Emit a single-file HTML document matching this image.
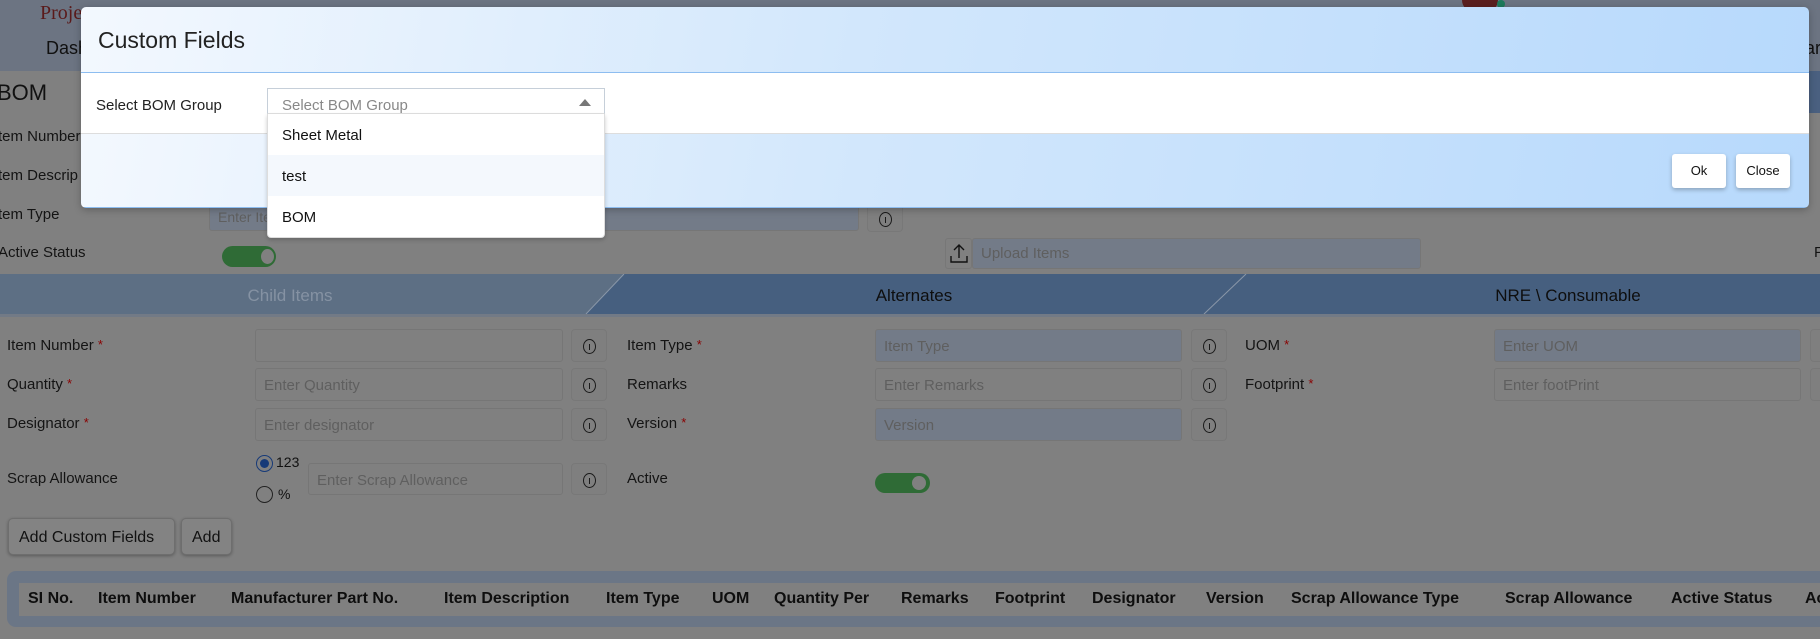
<!DOCTYPE html>
<html><head><meta charset="utf-8"><style>
*{box-sizing:border-box;margin:0;padding:0}
body{width:1820px;height:639px;overflow:hidden;background:#808080;font-family:"Liberation Sans",sans-serif;position:relative;color:#111}
.a{position:absolute;white-space:nowrap}
.lbl{font-size:15px;color:#141414}
.req{color:#8a0000;font-size:13px;vertical-align:top}
.inp{position:absolute;height:33px;border:1px solid #767676;border-radius:3px;background:#808080;font-size:15px;color:#5f5f5f;padding:8px 8px;white-space:nowrap;overflow:hidden}
.dis{background:#737b88}
.info{position:absolute;width:36px;height:33px;border:1px solid #787878;border-radius:4px;background:#7f7f7f}
.info:after{content:"";position:absolute;left:11px;top:9px;width:11px;height:13px;border:1.3px solid #1a1a1a;border-radius:50%}
.info:before{content:"";position:absolute;left:17px;top:14px;width:1.3px;height:6px;background:#1a1a1a}
.th{position:absolute;top:590px;font-size:16px;font-weight:bold;color:#0e0e0e;white-space:nowrap}
</style></head><body>
<div class="a" style="left:0;top:0;width:1820px;height:71px;background:#6c7482"></div>
<div class="a" style="left:40px;top:2px;font-family:'Liberation Serif',serif;font-size:20px;color:#5a1a1a">Proje</div>
<div class="a" style="left:46px;top:38px;font-size:18px;color:#111">Dash</div>
<div class="a" style="left:1805px;top:38px;font-size:18px;color:#111">ar</div>
<div class="a" style="left:1462px;top:0;width:36px;height:12px;border-radius:0 0 18px 18px;background:#5a1f1f"></div>
<div class="a" style="left:1497px;top:0;width:8px;height:8px;border-radius:50%;background:#1d7a5b"></div>
<div class="a" style="left:1780px;top:71px;width:40px;height:42px;background:#4a6080"></div>
<div class="a" style="left:-3px;top:80px;font-size:22px;color:#111">BOM</div>
<div class="a lbl" style="left:-2px;top:128px">tem Number</div>
<div class="a lbl" style="left:-2px;top:167px">tem Descrip</div>
<div class="a lbl" style="left:-2px;top:206px">tem Type</div>
<div class="a lbl" style="left:-2px;top:244px">Active Status</div>
<div class="inp dis" style="left:209px;top:204px;width:650px;height:27px;padding:4px 8px;font-size:14px">Enter Item Type</div>
<div class="info" style="left:867px;top:202px;height:30px"></div>
<div class="a" style="left:222px;top:246px;width:54px;height:21px;border-radius:11px;background:#2f6b36"></div>
<div class="a" style="left:261px;top:249px;width:13px;height:15px;border-radius:50%;background:#808080"></div>
<div class="a" style="left:945px;top:238px;width:27px;height:31px;border:1px solid #777;border-radius:3px"></div>
<svg class="a" style="left:949px;top:243px" width="20" height="22"><path d="M10 2V15M5 7L10 2L15 7M2 13V19H18V13" fill="none" stroke="#111" stroke-width="1.4"/></svg>
<div class="inp dis" style="left:972px;top:238px;width:449px;height:31px;padding:6px 8px;font-size:15px">Upload Items</div>
<div class="a lbl" style="left:1814px;top:244px">F</div>
<svg class="a" style="left:0;top:274px" width="1820" height="40">
<rect width="1820" height="40" fill="#465f7f"/>
<polygon points="0,0 624,0 586,40 0,40" fill="#5d6f84"/>
<line x1="624" y1="0" x2="586" y2="40" stroke="#8a97a8" stroke-width="1"/>
<line x1="1246" y1="0" x2="1204" y2="40" stroke="#8a97a8" stroke-width="1"/>
<text x="290" y="27" font-family="Liberation Sans" font-size="17" fill="#8592a3" text-anchor="middle">Child Items</text>
<text x="914" y="27" font-family="Liberation Sans" font-size="17" fill="#0e0e0e" text-anchor="middle">Alternates</text>
<text x="1568" y="27" font-family="Liberation Sans" font-size="17" fill="#0e0e0e" text-anchor="middle">NRE \ Consumable</text>
</svg>
<div class="a" style="left:0;top:314px;width:1820px;height:3px;background:#727a86"></div>
<div class="a lbl" style="left:7px;top:337px">Item Number <span class="req">*</span></div>
<div class="a lbl" style="left:7px;top:376px">Quantity <span class="req">*</span></div>
<div class="a lbl" style="left:7px;top:415px">Designator <span class="req">*</span></div>
<div class="a lbl" style="left:7px;top:470px">Scrap Allowance</div>
<div class="inp" style="left:255px;top:329px;width:308px"></div>
<div class="inp" style="left:255px;top:368px;width:308px">Enter Quantity</div>
<div class="inp" style="left:255px;top:408px;width:308px">Enter designator</div>
<div class="info" style="left:571px;top:329px"></div>
<div class="info" style="left:571px;top:368px"></div>
<div class="info" style="left:571px;top:408px"></div>
<div class="a" style="left:256px;top:455px;width:17px;height:17px;border-radius:50%;border:1.5px solid #173a78;background:#808080"></div>
<div class="a" style="left:260px;top:459px;width:9px;height:9px;border-radius:50%;background:#173a78"></div>
<div class="a" style="left:276px;top:454px;font-size:14px">123</div>
<div class="a" style="left:256px;top:486px;width:17px;height:17px;border-radius:50%;border:1.3px solid #222"></div>
<div class="a" style="left:278px;top:486px;font-size:14px">%</div>
<div class="inp" style="left:308px;top:463px;width:255px;height:32px">Enter Scrap Allowance</div>
<div class="info" style="left:571px;top:463px;height:32px"></div>
<div class="a lbl" style="left:627px;top:337px">Item Type <span class="req">*</span></div>
<div class="a lbl" style="left:627px;top:376px">Remarks</div>
<div class="a lbl" style="left:627px;top:415px">Version <span class="req">*</span></div>
<div class="a lbl" style="left:627px;top:470px">Active</div>
<div class="inp dis" style="left:875px;top:329px;width:307px">Item Type</div>
<div class="inp" style="left:875px;top:368px;width:307px">Enter Remarks</div>
<div class="inp dis" style="left:875px;top:408px;width:307px">Version</div>
<div class="info" style="left:1191px;top:329px"></div>
<div class="info" style="left:1191px;top:368px"></div>
<div class="info" style="left:1191px;top:408px"></div>
<div class="a" style="left:875px;top:473px;width:55px;height:20px;border-radius:10px;background:#2f6b36"></div>
<div class="a" style="left:912px;top:476px;width:14px;height:14px;border-radius:50%;background:#808080"></div>
<div class="a lbl" style="left:1245px;top:337px">UOM <span class="req">*</span></div>
<div class="a lbl" style="left:1245px;top:376px">Footprint <span class="req">*</span></div>
<div class="inp dis" style="left:1494px;top:329px;width:307px">Enter UOM</div>
<div class="inp" style="left:1494px;top:368px;width:307px">Enter footPrint</div>
<div class="info" style="left:1810px;top:329px"></div>
<div class="info" style="left:1810px;top:368px"></div>
<div class="a" style="left:8px;top:518px;width:167px;height:37px;border:1px solid #6e6e6e;border-radius:5px;background:#838383;box-shadow:0 1px 3px rgba(0,0,0,.3);font-size:16px;padding:10px 0 0 10px">Add Custom Fields</div>
<div class="a" style="left:181px;top:518px;width:51px;height:37px;border:1px solid #6e6e6e;border-radius:5px;background:#838383;box-shadow:0 1px 3px rgba(0,0,0,.3);font-size:16px;padding:10px 0 0 10px">Add</div>
<div class="a" style="left:7px;top:571px;width:1830px;height:56px;border-radius:9px;background:#6b7686"></div>
<div class="a" style="left:19px;top:583px;width:1820px;height:33px;background:#808080"></div>
<div class="th" style="left:28px">SI No.</div>
<div class="th" style="left:98px">Item Number</div>
<div class="th" style="left:231px">Manufacturer Part No.</div>
<div class="th" style="left:444px">Item Description</div>
<div class="th" style="left:606px">Item Type</div>
<div class="th" style="left:712px">UOM</div>
<div class="th" style="left:774px">Quantity Per</div>
<div class="th" style="left:901px">Remarks</div>
<div class="th" style="left:995px">Footprint</div>
<div class="th" style="left:1092px">Designator</div>
<div class="th" style="left:1206px">Version</div>
<div class="th" style="left:1291px">Scrap Allowance Type</div>
<div class="th" style="left:1505px">Scrap Allowance</div>
<div class="th" style="left:1671px">Active Status</div>
<div class="th" style="left:1805px">Ac</div>
<div class="a" style="left:81px;top:7px;width:1728px;height:201px;border-radius:5px;overflow:hidden;box-shadow:0 2px 8px rgba(0,0,0,.25)">
 <div style="position:absolute;left:0;top:0;width:100%;height:66px;background:linear-gradient(100deg,#f3f8fe 0%,#d2e7fc 45%,#b7d9fc 100%);border-bottom:1.5px solid #8dbdf0"></div>
 <div style="position:absolute;left:17px;top:20px;font-size:23px;color:#222">Custom Fields</div>
 <div style="position:absolute;left:0;top:66px;width:100%;height:61px;background:#fff;border-bottom:1px solid #ddd"></div>
 <div style="position:absolute;left:15px;top:90px;font-size:15px;color:#222">Select BOM Group</div>
 <div style="position:absolute;left:0;top:127px;width:100%;height:74px;background:linear-gradient(100deg,#f3f8fe 0%,#d2e7fc 45%,#b7d9fc 100%);border-bottom:1.5px solid #8dbdf0"></div>
 <div style="position:absolute;left:1591px;top:147px;width:54px;height:34px;background:#fff;border-radius:3px;box-shadow:0 2px 4px rgba(0,0,0,.25);font-size:13px;text-align:center;line-height:34px">Ok</div>
 <div style="position:absolute;left:1655px;top:147px;width:54px;height:34px;background:#fff;border-radius:3px;box-shadow:0 2px 4px rgba(0,0,0,.25);font-size:13px;text-align:center;line-height:34px">Close</div>
</div>
<div class="a" style="left:267px;top:88px;width:338px;height:26px;border:1px solid #c6cfd9;border-bottom:1px solid #e2e2e2;background:#fff;font-size:15px;color:#888;padding:8px 0 0 14px">Select BOM Group</div>
<div class="a" style="left:579px;top:99px;width:0;height:0;border-left:6px solid transparent;border-right:6px solid transparent;border-bottom:7px solid #777"></div>
<div class="a" style="left:267px;top:114px;width:338px;height:124px;background:#fff;border:1px solid #ddd;border-top:none;border-radius:0 0 4px 4px;box-shadow:0 2px 4px rgba(0,0,0,.2)">
 <div style="height:41px;padding:13px 14px 0;font-size:15px">Sheet Metal</div>
 <div style="height:41px;padding:13px 14px 0;font-size:15px;background:#f4f8fd">test</div>
 <div style="height:41px;padding:13px 14px 0;font-size:15px">BOM</div>
</div>
</body></html>
